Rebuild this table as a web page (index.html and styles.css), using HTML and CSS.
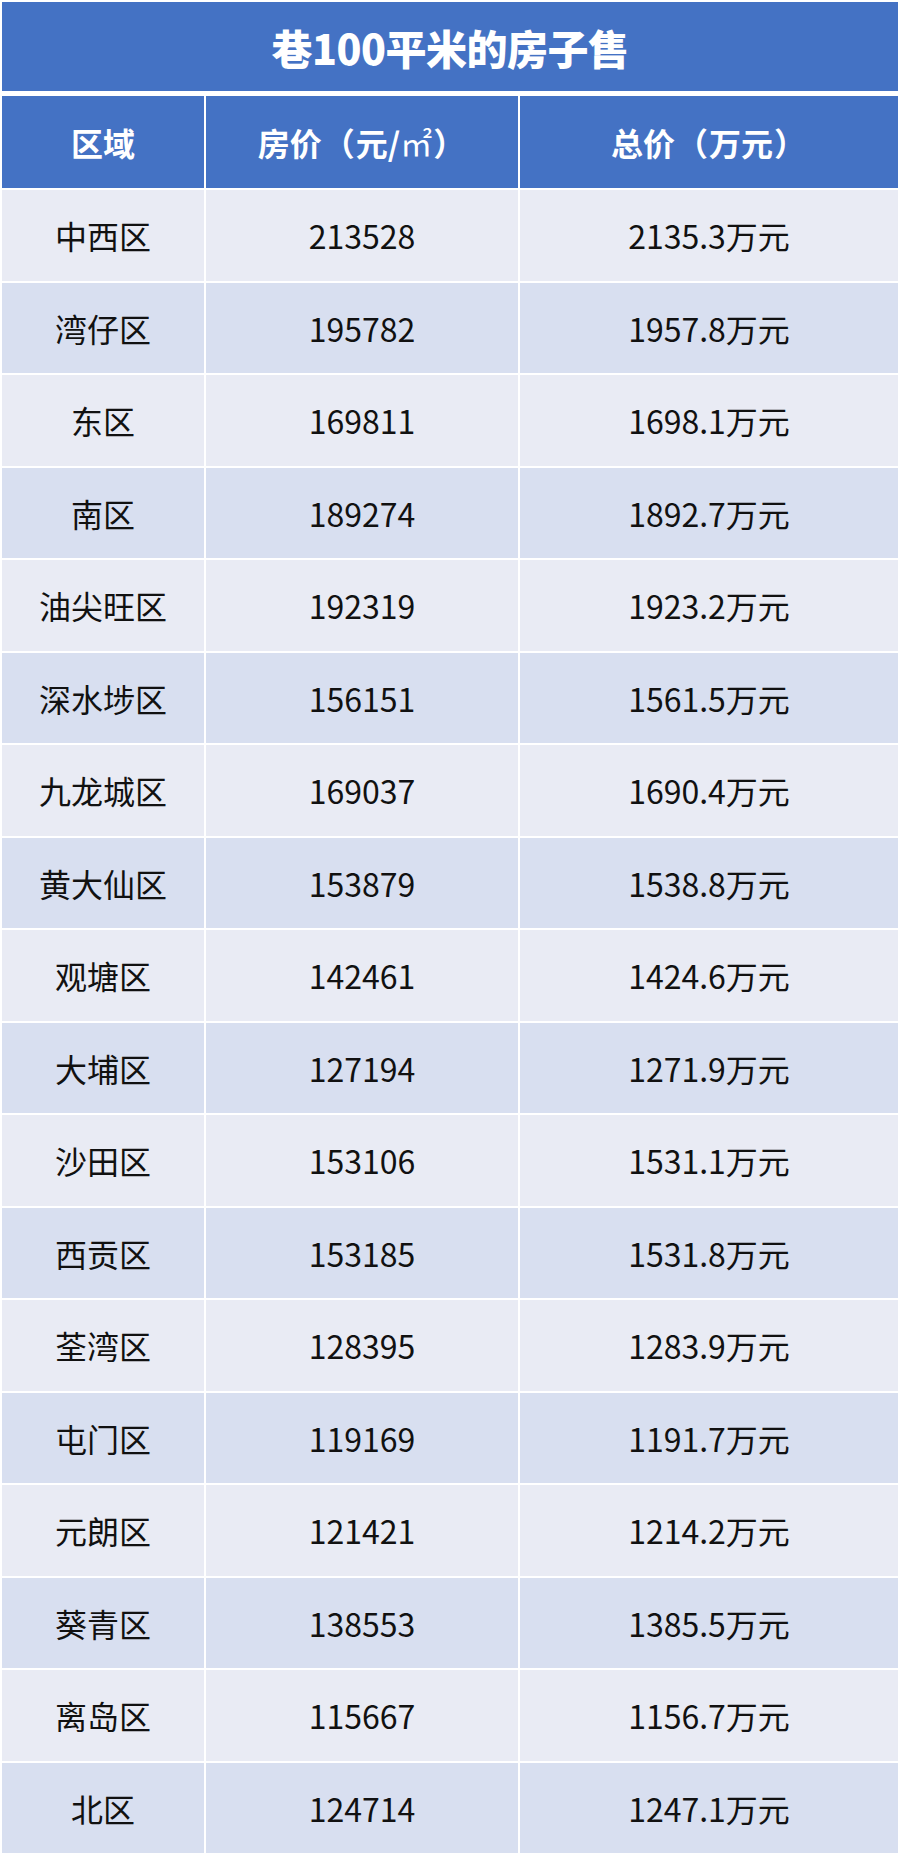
FILE: index.html
```html
<!DOCTYPE html>
<html lang="zh-CN">
<head>
<meta charset="utf-8">
<title>巷100平米的房子售</title>
<link rel="stylesheet" href="styles.css">
</head>
<body>
<div class="sheet">
  <div class="title">巷100平米的房子售</div>
  <div class="grid">
    <div class="hd">区域</div>
    <div class="hd">房价<span class="par">（</span>元/<span class="unit">㎡</span><span class="par">）</span></div>
    <div class="hd">总价<span class="par">（</span>万元<span class="par">）</span></div>

    <div class="c odd">中西区</div><div class="c odd">213528</div><div class="c odd">2135.3万元</div>
    <div class="c even">湾仔区</div><div class="c even">195782</div><div class="c even">1957.8万元</div>
    <div class="c odd">东区</div><div class="c odd">169811</div><div class="c odd">1698.1万元</div>
    <div class="c even">南区</div><div class="c even">189274</div><div class="c even">1892.7万元</div>
    <div class="c odd">油尖旺区</div><div class="c odd">192319</div><div class="c odd">1923.2万元</div>
    <div class="c even">深水埗区</div><div class="c even">156151</div><div class="c even">1561.5万元</div>
    <div class="c odd">九龙城区</div><div class="c odd">169037</div><div class="c odd">1690.4万元</div>
    <div class="c even">黄大仙区</div><div class="c even">153879</div><div class="c even">1538.8万元</div>
    <div class="c odd">观塘区</div><div class="c odd">142461</div><div class="c odd">1424.6万元</div>
    <div class="c even">大埔区</div><div class="c even">127194</div><div class="c even">1271.9万元</div>
    <div class="c odd">沙田区</div><div class="c odd">153106</div><div class="c odd">1531.1万元</div>
    <div class="c even">西贡区</div><div class="c even">153185</div><div class="c even">1531.8万元</div>
    <div class="c odd">荃湾区</div><div class="c odd">128395</div><div class="c odd">1283.9万元</div>
    <div class="c even">屯门区</div><div class="c even">119169</div><div class="c even">1191.7万元</div>
    <div class="c odd">元朗区</div><div class="c odd">121421</div><div class="c odd">1214.2万元</div>
    <div class="c even">葵青区</div><div class="c even">138553</div><div class="c even">1385.5万元</div>
    <div class="c odd">离岛区</div><div class="c odd">115667</div><div class="c odd">1156.7万元</div>
    <div class="c even">北区</div><div class="c even">124714</div><div class="c even">1247.1万元</div>
  </div>
</div>
</body>
</html>
```
FILE: styles.css
```css
html, body {
  margin: 0;
  padding: 0;
  background: #ffffff;
}
body {
  font-family: "Noto Sans CJK SC", "Noto Sans", sans-serif;
}
.sheet {
  width: 896px;
  padding: 2px 0 0 2px;
  height: 1855px;
  overflow: hidden;
}
.title {
  height: 89px;
  background: #4472c4;
  color: #ffffff;
  font-weight: 900;
  font-size: 41px;
  display: flex;
  align-items: center;
  justify-content: center;
  margin-bottom: 5px;
  letter-spacing: -0.5px;
}
.grid {
  display: grid;
  grid-template-columns: 202px 312px 378px;
  grid-template-rows: 92px;
  grid-auto-rows: 90.5px;
  column-gap: 2px;
  row-gap: 2px;
}
.hd {
  background: #4472c4;
  color: #ffffff;
  font-weight: 700;
  font-size: 32px;
  display: flex;
  align-items: center;
  justify-content: center;
}
.par {
  font-weight: 700;
  margin: 0 1px;
}
.unit {
  font-family: "Noto Sans CJK SC", serif;
  font-weight: 400;
}
.c {
  display: flex;
  align-items: center;
  justify-content: center;
  font-size: 32px;
  color: #111111;
}
.odd {
  background: #e9ebf4;
}
.even {
  background: #d8dff0;
}
```
